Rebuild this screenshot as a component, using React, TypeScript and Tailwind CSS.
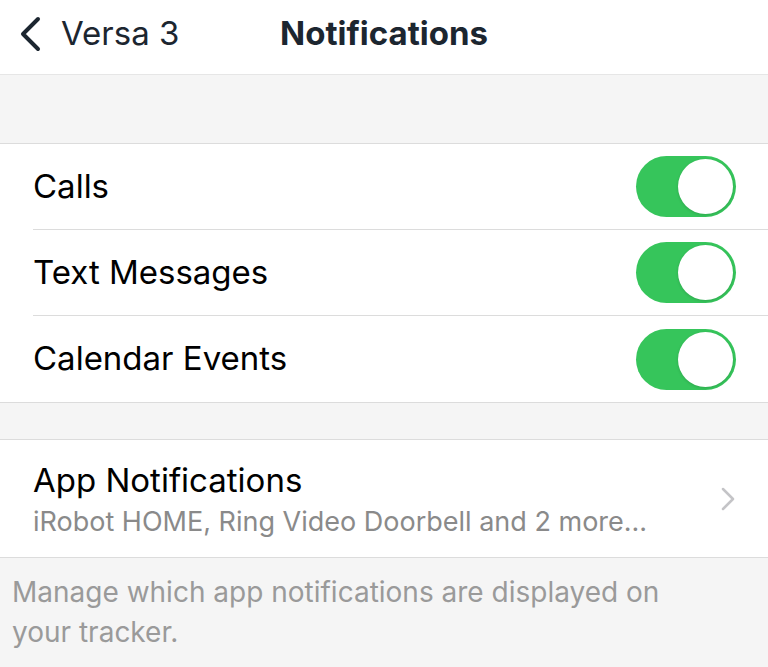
import React from "react";

const font = { fontFamily: "Inter, 'Liberation Sans', sans-serif" };

function Toggle() {
  return (
    <div className="flex h-[61px] w-[100px] items-center justify-end rounded-full bg-[#36c55b] px-[3px]">
      <div className="h-[55px] w-[55px] rounded-full bg-white shadow-[0_1px_3px_rgba(0,0,0,0.15)]" />
    </div>
  );
}

function ToggleRow({ label, last }: { label: string; last?: boolean }) {
  return (
    <div className="pl-[33px]">
      <div
        className={`flex h-[86px] items-center justify-between pr-[32px] ${
          last ? "" : "border-b border-[#dcdcdc]"
        }`}
      >
        <span className="text-[33px] text-black">{label}</span>
        <Toggle />
      </div>
    </div>
  );
}

export default function App() {
  return (
    <div className="min-h-[667px] w-full bg-[#f5f5f5]" style={font}>
      <header className="relative flex h-[75px] items-center border-b border-[#e6e6e6] bg-white pb-[6px]">
        <div className="flex items-center gap-[19px] pl-[18px]">
          <svg width="24" height="38" viewBox="0 0 24 38" fill="none">
            <path d="M20 4 L5 19 L20 34" stroke="#1c2630" strokeWidth="4" strokeLinecap="round" strokeLinejoin="round" />
          </svg>
          <span className="text-[33px] text-[#1c2630]">Versa 3</span>
        </div>
        <h1 className="absolute left-[280px] text-[33px] font-bold text-[#1c2630]">Notifications</h1>
      </header>

      <div className="h-[68px]" />

      <section className="border-y border-[#dcdcdc] bg-white">
        <ToggleRow label="Calls" />
        <ToggleRow label="Text Messages" />
        <ToggleRow label="Calendar Events" last />
      </section>

      <div className="h-[36px]" />

      <section className="flex h-[119px] items-center justify-between border-y border-[#dcdcdc] bg-white pl-[33px] pr-[32px]">
        <div className="flex flex-col">
          <span className="text-[33px] leading-[40px] text-black">App Notifications</span>
          <span className="mt-[6px] text-[27px] leading-[32px] text-[#8a8a8a]">
            iRobot HOME, Ring Video Doorbell and 2 more...
          </span>
        </div>
        <svg width="16" height="26" viewBox="0 0 16 26" fill="none">
          <path d="M3 3 L13 13 L3 23" stroke="#c4c4c7" strokeWidth="2.5" strokeLinecap="round" strokeLinejoin="round" />
        </svg>
      </section>

      <p className="px-[12px] pt-[14px] text-[28px] leading-[40px] text-[#9a9a9a]">
        Manage which app notifications are displayed on
        <br />
        your tracker.
      </p>
    </div>
  );
}
